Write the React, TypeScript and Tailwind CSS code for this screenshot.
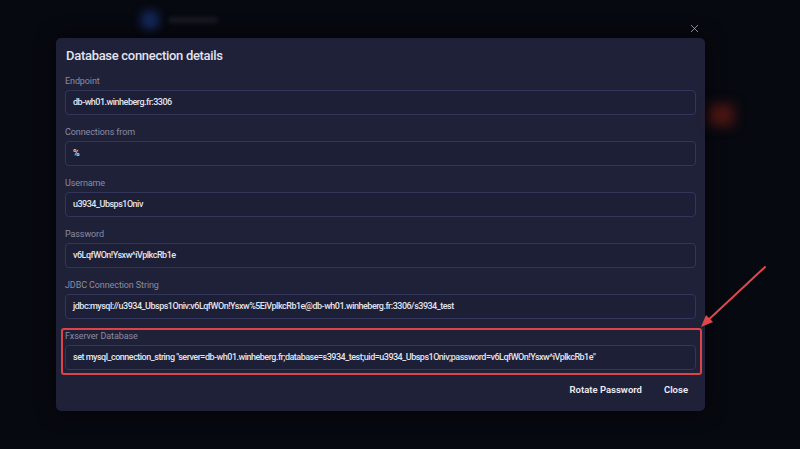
import { X } from "lucide-react"

const fields = [
  { label: "Endpoint", value: "db-wh01.winheberg.fr:3306" },
  { label: "Connections from", value: "%" },
  { label: "Username", value: "u3934_Ubsps1Oniv" },
  { label: "Password", value: "v6LqfWOn!Ysxw^iVplkcRb1e" },
  {
    label: "JDBC Connection String",
    value: "jdbc:mysql://u3934_Ubsps1Oniv:v6LqfWOn!Ysxw%5EiVplkcRb1e@db-wh01.winheberg.fr:3306/s3934_test",
  },
]

function Field({ label, value }: { label: string; value: string }) {
  return (
    <div className="flex flex-col">
      <div className="h-[12px] text-[9px] leading-[12px] text-[#8a8ca6] tracking-[-0.1px]">{label}</div>
      <div className="mt-[3px] h-[25px] flex items-center px-[7px] rounded-[4px] border border-[#33355a] bg-[#1d1f36] text-[9px] font-medium text-[#e3e4ee] tracking-[-0.5px] whitespace-nowrap overflow-hidden">
        {value}
      </div>
    </div>
  )
}

export default function App() {
  return (
    <div
      className="relative w-[800px] h-[449px] overflow-hidden bg-[#070910]"
      style={{ fontFamily: "Roboto, 'Noto Sans', sans-serif" }}
    >
      {/* blurred page behind the modal */}
      <div className="absolute left-[140px] top-[10px] w-[20px] h-[20px] rounded-full bg-[#122555] blur-[4px]" />
      <div className="absolute left-[168px] top-[17px] w-[50px] h-[6px] rounded bg-[#171922] blur-[2px]" />
      <div className="absolute left-[710px] top-[104px] w-[24px] h-[22px] rounded bg-[#4a1512] blur-[6px]" />

      {/* close icon */}
      <button className="absolute left-[688px] top-[22px] text-[#b4b5c0]">
        <X size={13} strokeWidth={1.4} />
      </button>

      <div className="pt-[38px] pl-[56px]">
        <div className="w-[649px] rounded-[5px] bg-[#1f2139] px-[9px] pt-[8px] pb-[11px] shadow-[0_0_20px_rgba(0,0,0,0.6)]">
          <h2 className="h-[20px] pl-[1px] text-[13px] leading-[20px] font-medium text-[#e2e3ee] tracking-[-0.3px]">
            Database connection details
          </h2>

          <div className="mt-[9px] flex flex-col gap-[11px]">
            {fields.map((f) => (
              <Field key={f.label} label={f.label} value={f.value} />
            ))}
            <div className="relative">
              <Field
                label="Fxserver Database"
                value={'set mysql_connection_string "server=db-wh01.winheberg.fr;database=s3934_test;uid=u3934_Ubsps1Oniv;password=v6LqfWOn!Ysxw^iVplkcRb1e"'}
              />
              <div className="absolute -left-[4px] -right-[6px] -top-[2px] -bottom-[5px] rounded-[3px] border-2 border-[#dc4448]" />
            </div>
          </div>

          <div className="mt-[10px] flex justify-end gap-[6px]">
            <button className="h-[20px] px-[8px] text-[9.5px] font-semibold text-[#eeeef5]">Rotate Password</button>
            <button className="h-[20px] px-[8px] text-[9.5px] font-semibold text-[#eeeef5]">Close</button>
          </div>
        </div>
      </div>

      {/* annotation arrow */}
      <svg className="absolute left-0 top-0" width="800" height="449" viewBox="0 0 800 449">
        <line x1="765" y1="267" x2="704" y2="324" stroke="#e0474b" strokeWidth="2" strokeLinecap="round" />
        <path d="M701 327 L706 315 L713 322 Z" fill="#e0474b" />
      </svg>
    </div>
  )
}
